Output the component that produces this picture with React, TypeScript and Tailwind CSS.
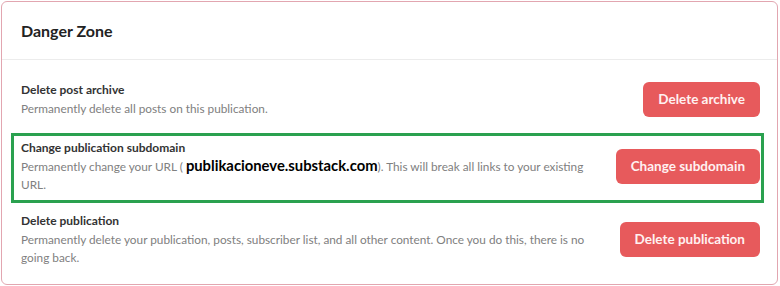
import React from "react";

interface DangerRowProps {
  title: string;
  action: string;
  children: React.ReactNode;
}

const DangerButton: React.FC<{ label: string }> = ({ label }) => (
  <button className="h-[35px] shrink-0 rounded-md bg-[#e75a5c] px-[15px] text-[13.5px] font-bold text-[#fff1f1]">
    {label}
  </button>
);

const DangerRow: React.FC<DangerRowProps> = ({ title, action, children }) => (
  <div className="flex items-center justify-between gap-6">
    <div className="max-w-[568px]">
      <div className="text-[12px] font-bold leading-[20px] text-[#333]">
        {title}
      </div>
      <div className="text-[11.8px] leading-[18px] text-[#808080]">
        {children}
      </div>
    </div>
    <DangerButton label={action} />
  </div>
);

export default function App() {
  return (
    <div className="h-[286px] w-[780px] bg-white pl-[1px] pt-[1px] font-['Lato',sans-serif]">
      <div className="h-[284px] w-[777px] rounded-md border border-[#e2a6b0] bg-white">
        <div className="flex h-[58px] items-center border-b border-[#ececec] px-[19px]">
          <h2 className="text-[16px] font-bold text-[#222]">Danger Zone</h2>
        </div>
        <div className="flex flex-col pl-[19px] pr-[17px] pt-[20px]">
          <DangerRow title="Delete post archive" action="Delete archive">
            Permanently delete all posts on this publication.
          </DangerRow>
          {/* highlighted row */}
          <div className="-ml-[10px] -mr-[4px] mt-[15px] border-[3px] border-[#2aa14f] pb-[6px] pl-[7px] pr-[1px] pt-[2px]">
            <DangerRow title="Change publication subdomain" action="Change subdomain">
              Permanently change your URL ({" "}
              <span className="text-[14.8px] font-bold leading-none text-black">
                publikacioneve.substack.com
              </span>
              ). This will break all links to your existing URL.
            </DangerRow>
          </div>
          <div className="mt-[8px]">
            <DangerRow title="Delete publication" action="Delete publication">
              Permanently delete your publication, posts, subscriber list, and
              all other content. Once you do this, there is no going back.
            </DangerRow>
          </div>
        </div>
      </div>
    </div>
  );
}
